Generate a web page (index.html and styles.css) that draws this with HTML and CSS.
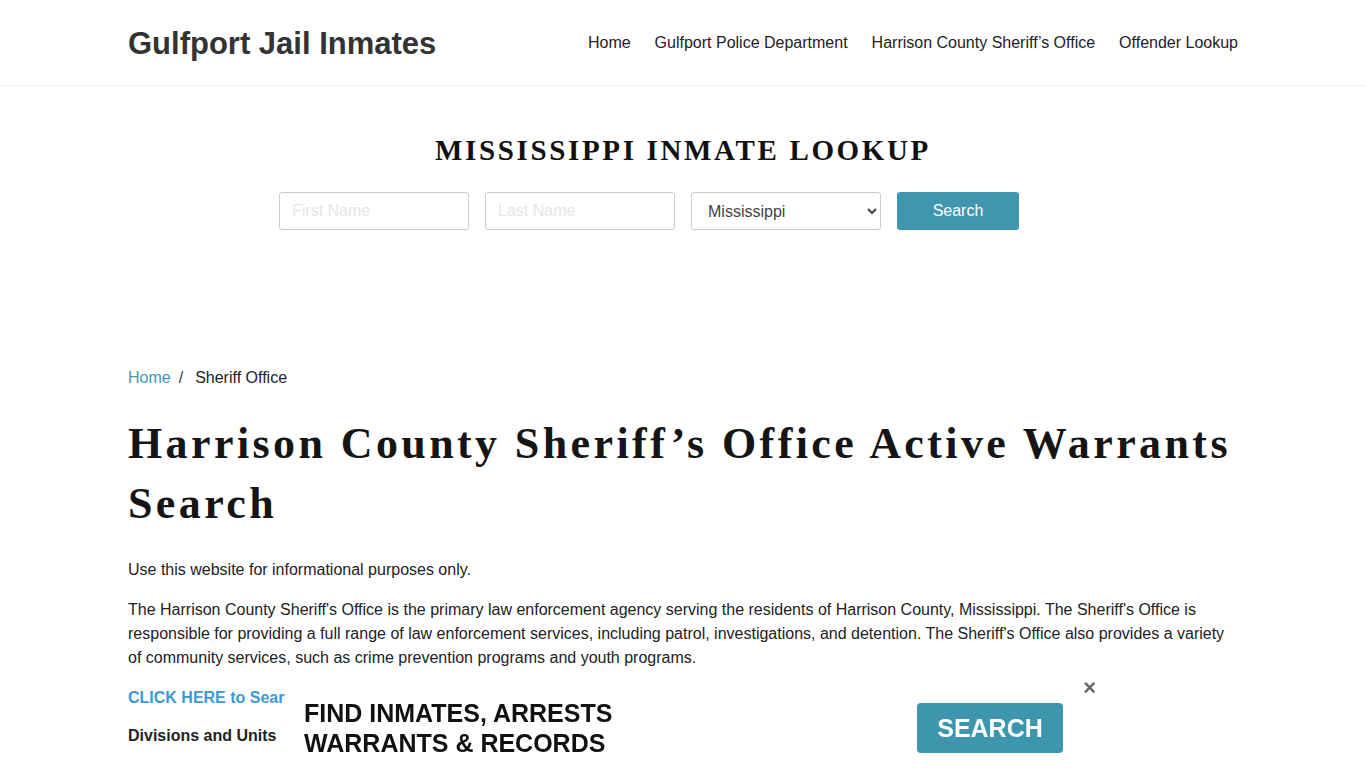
FILE: index.html
```html
<!DOCTYPE html>
<html lang="en">
<head>
<meta charset="utf-8">
<title>Harrison County Sheriff's Office Active Warrants Search</title>
<link rel="stylesheet" href="styles.css">
</head>
<body>
<header class="site-header">
  <div class="container header-inner">
    <a class="brand" href="#">Gulfport Jail Inmates</a>
    <nav class="main-nav">
      <a href="#">Home</a>
      <a href="#">Gulfport Police Department</a>
      <a href="#">Harrison County Sheriff’s Office</a>
      <a href="#">Offender Lookup</a>
    </nav>
  </div>
</header>

<section class="lookup">
  <h2 class="lookup-title">MISSISSIPPI INMATE LOOKUP</h2>
  <form class="lookup-form">
    <input class="field" type="text" placeholder="First Name">
    <input class="field" type="text" placeholder="Last Name">
    <select class="field select">
      <option>Mississippi</option>
    </select>
    <button class="btn-search" type="button">Search</button>
  </form>
</section>

<main class="container content">
  <nav class="breadcrumb">
    <a href="#">Home</a><span class="sep">/</span><span>Sheriff Office</span>
  </nav>
  <h1 class="page-title">Harrison County Sheriff’s Office Active Warrants Search</h1>
  <p>Use this website for informational purposes only.</p>
  <p>The Harrison County Sheriff's Office is the primary law enforcement agency serving the residents of Harrison County, Mississippi. The Sheriff's Office is responsible for providing a full range of law enforcement services, including patrol, investigations, and detention. The Sheriff's Office also provides a variety of community services, such as crime prevention programs and youth programs.</p>
  <p class="cta-line"><a class="cta" href="#">CLICK HERE to Search Harrison County Sheriff’s Office Active Warrants</a></p>
  <p class="sub">Divisions and Units</p>
</main>

<div class="ad-bar">
  <div class="ad-text">FIND INMATES, ARRESTS<br>WARRANTS &amp; RECORDS</div>
  <a class="ad-btn" href="#">SEARCH</a>
  <span class="ad-close">×</span>
</div>
</body>
</html>
```

FILE: styles.css
```css
* { box-sizing: border-box; }
body {
  margin: 0;
  font-family: "Liberation Sans", Arial, sans-serif;
  font-size: 16px;
  line-height: 24px;
  color: #222;
  background: #fff;
}
a { text-decoration: none; }
.container {
  max-width: 1140px;
  margin: 0 auto;
  padding: 0 15px;
}
.site-header {
  height: 86px;
  border-bottom: 1px solid #f0f0f0;
}
.header-inner {
  height: 85px;
  display: flex;
  align-items: center;
  justify-content: space-between;
}
.brand {
  font-size: 31px;
  font-weight: bold;
  color: #333;
  line-height: 1;
  padding-top: 1px;
}
.main-nav {
  display: flex;
  gap: 24px;
}
.main-nav a {
  color: #222;
  font-size: 16px;
}
.lookup {
  padding-top: 48px;
  height: 278px;
  text-align: center;
}
.lookup-title {
  margin: 0;
  font-family: "Liberation Serif", "Times New Roman", serif;
  font-weight: bold;
  font-size: 29px;
  line-height: 32px;
  letter-spacing: 2.65px;
  color: #111;
}
.lookup-form {
  margin-top: 26px;
  display: flex;
  justify-content: center;
  gap: 16px;
  padding-right: 68px;
}
.field {
  width: 190px;
  height: 38px;
  border: 1px solid #ccc;
  border-radius: 3px;
  padding: 0 12px;
  font-family: "Liberation Sans", Arial, sans-serif;
  font-size: 16px;
  color: #444;
  background: #fff;
}
.field::placeholder { color: #e6e6e6; opacity: 1; }
.select { padding: 0 12px 0 12px; }
.btn-search {
  width: 122px;
  height: 38px;
  border: 0;
  border-radius: 3px;
  background: #4096ae;
  color: #fff;
  font-family: "Liberation Sans", Arial, sans-serif;
  font-size: 16px;
}
.content { padding-top: 2px; }
.breadcrumb {
  margin-top: 0;
  font-size: 16px;
}
.breadcrumb a { color: #4a95ad; }
.breadcrumb .sep { padding: 0 12px 0 8px; color: #333; }
.page-title {
  margin: 24px 0 24px;
  font-family: "Liberation Serif", "Times New Roman", serif;
  font-weight: bold;
  font-size: 44px;
  line-height: 60px;
  letter-spacing: 3.4px;
  color: #151515;
}
p { margin: 0 0 16px; }
.cta-line { margin-bottom: 14px; }
.cta {
  color: #3a9ad4;
  font-weight: bold;
}
.sub { font-weight: bold; margin-top: 0; }
.ad-bar {
  position: fixed;
  left: 285px;
  bottom: 0;
  width: 796px;
  height: 96px;
  background: #fff;
  display: flex;
  align-items: center;
  justify-content: space-between;
  padding: 0 18px 0 19px;
}
.ad-text {
  font-size: 25px;
  line-height: 30px;
  font-weight: bold;
  color: #111;
  margin-top: 16px;
}
.ad-btn {
  width: 146px;
  height: 50px;
  border-radius: 4px;
  background: #3e95ae;
  color: #fff;
  font-size: 25px;
  font-weight: bold;
  display: flex;
  align-items: center;
  justify-content: center;
  margin-top: 16px;
}
.ad-close {
  position: absolute;
  right: -15px;
  top: 4px;
  font-size: 22px;
  line-height: 24px;
  color: #666;
  font-weight: bold;
}
```
